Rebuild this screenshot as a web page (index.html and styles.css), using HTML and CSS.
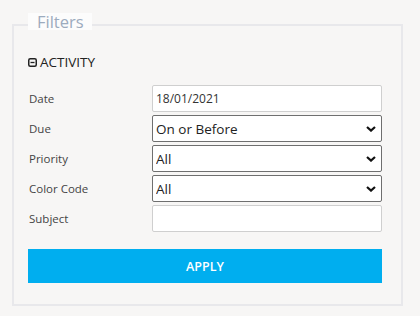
FILE: index.html
```html
<!DOCTYPE html>
<html>
<head>
<meta charset="utf-8">
<link rel="stylesheet" href="styles.css">
</head>
<body>
<fieldset class="filters">
  <legend class="filters-legend"><span class="legend-text">Filters</span></legend>
  <div class="section-title">
    <svg class="toggle-icon" width="9" height="9" viewBox="0 0 9 9"><rect x="0.75" y="0.75" width="7.5" height="7.5" rx="1.5" fill="none" stroke="#222" stroke-width="1.5"/><line x1="2.5" y1="4.5" x2="6.5" y2="4.5" stroke="#222" stroke-width="1.3"/></svg>
    <span>ACTIVITY</span>
  </div>
  <div class="rows">
    <div class="row"><label class="lbl">Date</label><input class="field" type="text" value="18/01/2021"></div>
    <div class="row"><label class="lbl">Due</label>
      <div class="select-wrap"><select class="field sel"><option>On or Before</option></select>
      <svg class="chev" width="10" height="6" viewBox="0 0 10 6"><path d="M1 1 L5 4.6 L9 1" fill="none" stroke="#111" stroke-width="2.2"/></svg></div></div>
    <div class="row"><label class="lbl">Priority</label>
      <div class="select-wrap"><select class="field sel"><option>All</option></select>
      <svg class="chev" width="10" height="6" viewBox="0 0 10 6"><path d="M1 1 L5 4.6 L9 1" fill="none" stroke="#111" stroke-width="2.2"/></svg></div></div>
    <div class="row"><label class="lbl">Color Code</label>
      <div class="select-wrap"><select class="field sel"><option>All</option></select>
      <svg class="chev" width="10" height="6" viewBox="0 0 10 6"><path d="M1 1 L5 4.6 L9 1" fill="none" stroke="#111" stroke-width="2.2"/></svg></div></div>
    <div class="row"><label class="lbl">Subject</label><input class="field" type="text" value=""></div>
  </div>
  <button class="apply">APPLY</button>
</fieldset>
</body>
</html>
```
FILE: styles.css
```css
html, body {
  margin: 0;
  padding: 0;
  background: #f7f6f5;
  font-family: "Open Sans", sans-serif;
}
body {
  width: 420px;
  height: 316px;
  overflow: hidden;
}
.filters {
  margin: 13px 0 0 12px;
  width: 391px;
  box-sizing: border-box;
  border: 2px solid #e8e8eb;
  padding: 0 19px 21px 14px;
  min-width: 0;
}
.filters-legend {
  padding: 0 0 7px 0;
}
.legend-text {
  display: block;
  height: 17px;
  line-height: 17px;
  padding: 0 8px 0 9px;
  background: #fcfcfc;
  color: #9cabbe;
  font-size: 16.5px;
}
.section-title {
  display: flex;
  align-items: center;
  gap: 3px;
  margin-top: 16px;
  height: 18px;
  font-size: 13.5px;
  color: #222;
}
.toggle-icon {
  display: block;
}
.rows {
  margin-top: 14px;
  display: flex;
  flex-direction: column;
  gap: 3px;
}
.row {
  display: grid;
  grid-template-columns: 124px 1fr;
  align-items: center;
  height: 27px;
}
.lbl {
  font-size: 11.5px;
  color: #444;
  padding-left: 1px;
}
.field {
  box-sizing: border-box;
  width: 100%;
  height: 27px;
  margin: 0;
  border: 1px solid #cfcfcf;
  border-radius: 2px;
  background: #fff;
  font-family: "Open Sans", sans-serif;
  font-size: 12px;
  color: #333;
  padding: 0 3px;
  outline: none;
}
.select-wrap {
  position: relative;
}
.sel {
  appearance: none;
  -webkit-appearance: none;
  border-color: #6f6f6f;
  font-size: 13.5px;
  color: #222;
  padding: 0 3px;
}
.chev {
  position: absolute;
  right: 6px;
  top: 11px;
  pointer-events: none;
}
.apply {
  display: block;
  width: 100%;
  margin-top: 17px;
  height: 34px;
  border: 0;
  background: #00aeef;
  color: #fff;
  font-family: "Open Sans", sans-serif;
  font-weight: 600;
  font-size: 12.5px;
  padding: 0;
}
```
